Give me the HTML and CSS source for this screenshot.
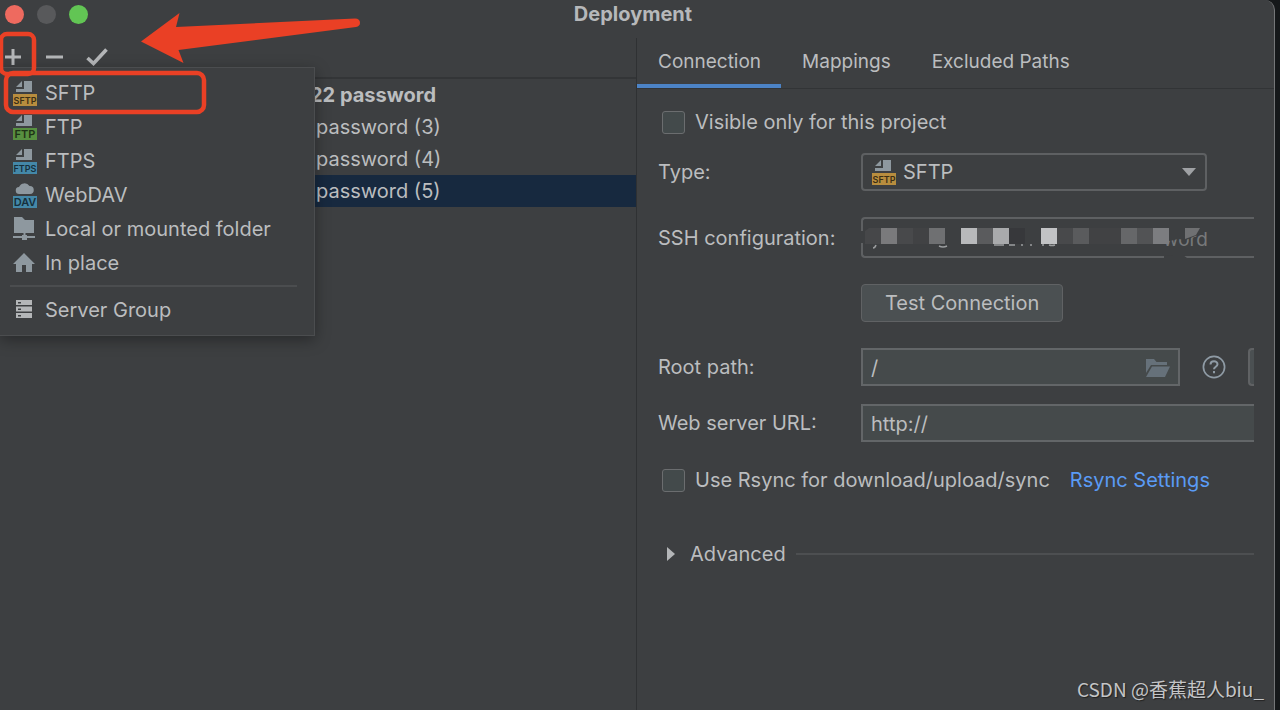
FILE: index.html
```
<!DOCTYPE html>
<html lang="en">
<head>
<meta charset="utf-8">
<title>Deployment</title>
<link rel="stylesheet" href="styles.css">
</head>
<body>
<svg class="defs" width="0" height="0" aria-hidden="true">
  <symbol id="doc" viewBox="0 0 24 13"><path d="M9 0v6H3z M11 0h8v11H3V8h8z" fill="#8e989f"/></symbol>
</svg>
<div class="window">
  <header class="titlebar">
    <div class="lights">
      <button class="light light-close" aria-label="Close"></button>
      <button class="light light-min" aria-label="Minimize"></button>
      <button class="light light-zoom" aria-label="Zoom"></button>
    </div>
    <h1 class="title">Deployment</h1>
  </header>
  <div class="panes">
    <section class="servers">
      <div class="toolbar">
        <button class="tool" aria-label="Add"><svg width="18" height="18" viewBox="0 0 18 18"><path d="M9 1v16M1 9h16" stroke="#b4b6b8" stroke-width="3"/></svg></button>
        <button class="tool" aria-label="Remove"><svg width="18" height="18" viewBox="0 0 18 18"><path d="M1 9h17" stroke="#b4b6b8" stroke-width="3"/></svg></button>
        <button class="tool" aria-label="Use as default"><svg width="22" height="18" viewBox="0 0 22 18"><path d="M1.500 10l6 5.500L20.500 1.500" fill="none" stroke="#b4b6b8" stroke-width="3.600"/></svg></button>
      </div>
      <ul class="list">
        <li class="server server-default">22 password</li>
        <li class="server">password (3)</li>
        <li class="server">password (4)</li>
        <li class="server server-selected">password (5)</li>
      </ul>
      <div class="menu" role="menu">
        <button class="item" role="menuitem"><svg class="icon" viewBox="0 0 24 25"><use href="#doc" width="24" height="13"/><path d="M0 13h24v12H0z" fill="#b88d3e"/><text class="tag" x="12" y="23" fill="#3b2e14">SFTP</text></svg>SFTP</button>
        <button class="item" role="menuitem"><svg class="icon" viewBox="0 0 24 25"><use href="#doc" width="24" height="13"/><path d="M0 13h24v12H0z" fill="#579040"/><text class="tag tag-wide" x="12" y="23" fill="#1f3317">FTP</text></svg>FTP</button>
        <button class="item" role="menuitem"><svg class="icon" viewBox="0 0 24 25"><use href="#doc" width="24" height="13"/><path d="M0 13h24v12H0z" fill="#4488a8"/><text class="tag" x="12" y="23" fill="#17303c">FTPS</text></svg>FTPS</button>
        <button class="item" role="menuitem"><svg class="icon" viewBox="0 0 24 25"><path d="M6.500 11a3.500 3.500 0 0 1-.5-7A6 6 0 0 1 16.500 3 4 4 0 0 1 17 11z" fill="#8e989f"/><path d="M0 13h24v12H0z" fill="#4488a8"/><text class="tag tag-wide" x="12" y="23" fill="#17303c">DAV</text></svg>WebDAV</button>
        <button class="item" role="menuitem"><svg class="icon" viewBox="0 0 24 25"><path d="M1 0h8l3 3h9v13h-8.500v2H14v1h8v2h-8v2H9v-2H0v-2h9v-1h1.500v-2H1z" fill="#8e989f"/></svg>Local or mounted folder</button>
        <button class="item" role="menuitem"><svg class="icon" viewBox="0 0 24 25"><path d="M11 2L0 13h3v8h6v-7h4v7h6v-8h3z" fill="#8e989f"/></svg>In place</button>
        <hr class="separator">
        <button class="item" role="menuitem"><svg class="icon" viewBox="0 0 24 25"><path fill-rule="evenodd" d="M3 2h16v5H3zM5 4v1.500h3V4zM3 8.500h16v5H3zM5 10.500V12h3v-1.500zM3 15h16v5H3zM5 17v1.500h3V17z" fill="#b4b6b8"/></svg>Server Group</button>
      </div>
    </section>
    <section class="details">
      <nav class="tabs" role="tablist">
        <button class="tab tab-active" role="tab" aria-selected="true">Connection</button>
        <button class="tab" role="tab">Mappings</button>
        <button class="tab" role="tab">Excluded Paths</button>
      </nav>
      <form class="form">
        <div class="check-row"><input class="check" type="checkbox" id="only"><label for="only">Visible only for this project</label></div>
        <div class="row row-type">
          <label class="name" for="type">Type:</label>
          <div class="combo">
            <svg class="icon combo-icon" viewBox="0 0 24 25"><use href="#doc" width="24" height="13"/><path d="M0 13h24v12H0z" fill="#b88d3e"/><text class="tag" x="12" y="23" fill="#3b2e14">SFTP</text></svg>
            <select class="select" id="type"><option>SFTP</option></select>
            <svg class="chevron" width="14" height="8" viewBox="0 0 14 8"><path d="M0 0h14L7 8z" fill="#9fa1a4"/></svg>
          </div>
        </div>
        <div class="row row-ssh">
          <label class="name" for="ssh">SSH configuration:</label>
          <div class="ssh">
            <input class="ssh-input" id="ssh" value="word">
            <svg class="mosaic" width="393" height="41" viewBox="-1 0 393 41" aria-hidden="true">
              <g fill="#3d3f41"><path d="M-1 14h3v12h-3zM302 39l9-1h10l4 3h-23zM300 8h38v9l-14 6-8-1-8 2-8-2z"/></g>
              <path d="M3 14l4-3h12v16H3z" fill="#464749"/>
              <path d="M19 11h16v16H19z" fill="#7a7a7c"/>
              <path d="M35 11h16v16H35zM195 11h16v16h-16z" fill="#48494b"/>
              <path d="M51 11h16v16H51zM227 11h32v16h-32z" fill="#414244"/>
              <path d="M67 11h16v16H67z" fill="#6f7072"/>
              <path d="M99 11h16v16H99z" fill="#b8b9bb"/>
              <path d="M115 11h16v16h-16zM211 11h16v16h-16z" fill="#5a5b5d"/>
              <path d="M131 11h16v16h-16z" fill="#a9aaac"/>
              <path d="M147 11h16v16h-16z" fill="#37383b"/>
              <path d="M179 11h16v16h-16z" fill="#c2c3c5"/>
              <path d="M259 11h16v16h-16z" fill="#666769"/>
              <path d="M275 11h16v16h-16z" fill="#525355"/>
              <path d="M291 11h16v16h-16z" fill="#7c7d80"/>
              <path d="M323 11h15l-4 7-11 4z" fill="#6f7072"/>
              <path d="M11 31q2 0 3-3M77 29q4 2 8 0M132 28h10M147 28h6M159 28h2M168 28h2M180 28h2M187 28q3 1 6 0" fill="none" stroke="#9b9d9f" stroke-width="1.500"/>
            </svg>
          </div>
        </div>
        <div class="row row-test"><button class="test" type="button">Test Connection</button></div>
        <div class="row row-root">
          <label class="name" for="root">Root path:</label>
          <div class="root">
            <div class="root-box">
              <input class="field" id="root" value="/">
              <svg class="folder" width="24" height="18" viewBox="0 0 24 18"><path d="M0 0h8l2.500 3H21v3H5L0 14z M6 7.500h18L19 18H0z" fill="#66717a"/></svg>
            </div>
            <button class="help" type="button" aria-label="Help"><svg width="24" height="24" viewBox="0 0 24 24" fill="none" stroke="#8f9ba5" stroke-width="1.700"><circle cx="12" cy="12" r="10.600"/><path d="M8.500 9.500C8.500 5.200 15.500 5.200 15.500 9.300c0 2.500-3.500 2.400-3.500 5M12 16v2.200" stroke-width="2"/></svg></button>
            <button class="cut" type="button" aria-label="Autodetect"></button>
          </div>
        </div>
        <div class="row row-url">
          <label class="name" for="url">Web server URL:</label>
          <input class="field field-open" id="url" value="http://">
        </div>
        <div class="check-row row-rsync"><input class="check" type="checkbox" id="rsync"><label for="rsync">Use Rsync for download/upload/sync</label><a class="link" href="#rsync">Rsync Settings</a></div>
        <button class="advanced" type="button"><svg width="8" height="14" viewBox="0 0 8 14"><path d="M0 0l8 7-8 7z" fill="#b4b6b8"/></svg><span>Advanced</span><span class="rule"></span></button>
      </form>
    </section>
  </div>
</div>
<svg class="marks" width="370" height="120" viewBox="0 0 370 120" aria-hidden="true">
  <path d="M141 41.500L179.500 13 176 27 355 18.500Q360 18.500 360 23 360 26 356 27L178.500 50 183.500 63z" fill="#ea4025"/>
  <g fill="none" stroke="#ea4025" stroke-width="4.500"><rect x="1" y="34" width="33" height="40" rx="6"/><rect x="6" y="73" width="198" height="39" rx="7"/></g>
</svg>
<div class="watermark">CSDN @香蕉超人biu_</div>
</body>
</html>
```
FILE: styles.css
```
* { box-sizing: border-box; }
body {
  margin: 0;
  background: #15181a;
  color: #bbbdbf;
  font-family: Inter, "Noto Sans CJK SC", sans-serif;
  font-size: 20px;
  line-height: 32px;
}
button, input, select { font: inherit; color: inherit; }
button { background: none; border: 0; padding: 0; }
.defs { position: absolute; }
.window {
  display: flex;
  flex-direction: column;
  min-height: 100vh;
  margin-right: 5px;
  background: #3d3f41;
  border-right: 1px solid #747678;
  border-top-right-radius: 10px;
}
.titlebar {
  display: grid;
  grid-template-columns: 1fr auto 1fr;
  align-items: start;
  height: 38px;
  padding-right: 8px;
}
.lights { display: flex; gap: 13px; padding: 5px; }
.light { width: 19px; height: 19px; border-radius: 50%; }
.light-close { background: #ee6a5f; }
.light-min { background: #58595b; }
.light-zoom { background: #62c554; }
.title { margin: 0; font-size: 20px; line-height: 28px; font-weight: 700; color: #b6b8ba; }
.panes { display: grid; grid-template-columns: 1fr 1fr; flex: 1; }
.servers { position: relative; border-right: 1px solid #2f3133; min-width: 0; }
.toolbar {
  display: flex;
  align-items: center;
  gap: 23px;
  height: 41px;
  padding: 0 4px 2px;
  border-bottom: 2px solid #333537;
}
.tool { display: flex; }
.list { margin: 0; padding: 0; list-style: none; }
.server { height: 32px; padding: 1px 0 0 316px; line-height: 31px; white-space: nowrap; }
.server-default { padding-left: 310px; font-weight: 700; }
.server-selected { background: #17293f; }
.menu {
  position: absolute;
  top: 29px;
  left: 0;
  width: 315px;
  padding: 8px 0;
  background: #3d3f41;
  border: 1px solid #4b4d4f;
  border-left: 0;
  box-shadow: 0 4px 14px rgba(0, 0, 0, .35);
}
.item {
  display: flex;
  align-items: center;
  gap: 8px;
  width: 100%;
  height: 34px;
  padding-left: 13px;
  text-align: left;
}
.icon { width: 24px; height: 25px; flex: none; }
.tag { font: 600 9px Inter, sans-serif; text-anchor: middle; }
.tag-wide { font-size: 11px; }
.separator { margin: 5px 17px 6px 10px; border: 0; border-top: 2px solid #4b4d4f; }
.details { min-width: 0; }
.tabs { display: flex; height: 51px; border-bottom: 1px solid #323436; }
.tab { padding: 2px 20px 0 21px; border-bottom: 4px solid transparent; font-size: 19px; line-height: 44px; }
.tab-active { border-bottom-color: #4c83c6; }
.form { display: flex; flex-direction: column; padding: 17px 20px 0 21px; }
.check-row { display: flex; align-items: center; padding-left: 4px; height: 32px; }
.check {
  appearance: none;
  width: 23px;
  height: 23px;
  margin: 0 10px 0 0;
  background: #434a4b;
  border: 1px solid #6b6d6f;
  border-radius: 3px;
}
.row { display: grid; grid-template-columns: 203px 1fr; align-items: center; }
.row-type { margin-top: 15px; }
.row-ssh { margin-top: 26px; }
.row-test { margin-top: 26px; }
.row-root { margin-top: 26px; }
.row-url { margin-top: 18px; }
.row-rsync { margin-top: 22px; }
.combo { position: relative; width: 88%; }
.select {
  display: block;
  appearance: none;
  width: 100%;
  height: 38px;
  padding: 0 40px;
  background: none;
  border: 2px solid #5e6062;
  border-radius: 4px;
}
.combo-icon { position: absolute; left: 11px; top: 7px; }
.chevron { position: absolute; right: 11px; top: 15px; }
.ssh { position: relative; overflow: hidden; }
.ssh-input {
  display: block;
  width: 100%;
  height: 41px;
  padding: 3px 46px 0 0;
  background: none;
  border: 2px solid #5e6062;
  border-right: 0;
  border-radius: 4px 0 0 4px;
  color: #77797b;
  font-size: 19px;
  text-align: right;
}
.mosaic { position: absolute; left: 0; top: 0; }
.test {
  grid-column: 2;
  justify-self: start;
  height: 38px;
  padding: 0 23px;
  background: #4b5052;
  border: 1px solid #606264;
  border-radius: 4px;
}
.root { display: flex; align-items: center; }
.root-box { position: relative; flex: 1; }
.field {
  display: block;
  width: 100%;
  height: 38px;
  padding: 2px 8px 0;
  background: #454a4b;
  border: 2px solid #636668;
  border-radius: 0;
}
.field-open { border-right: 0; }
.folder { position: absolute; right: 10px; top: 11px; }
.help { display: flex; margin: 0 22px; }
.cut { width: 6px; height: 38px; background: #4b5052; border: 2px solid #606264; border-right: 0; border-radius: 4px 0 0 4px; }
.link { margin-left: 20px; color: #5a9bf5; text-decoration: none; }
.advanced { display: flex; align-items: center; margin-top: 42px; padding-left: 9px; }
.advanced span:first-of-type { margin: 0 10px 0 15px; }
.rule { flex: 1; border-top: 2px solid #4d4f51; }
.marks { position: absolute; left: 0; top: 0; pointer-events: none; }
.watermark {
  position: absolute;
  right: 16px;
  bottom: 8px;
  color: #c4c5c7;
  font: 19px/26px "Noto Sans CJK SC", sans-serif;
  text-shadow: 1px 1px 1px #222;
}
```
